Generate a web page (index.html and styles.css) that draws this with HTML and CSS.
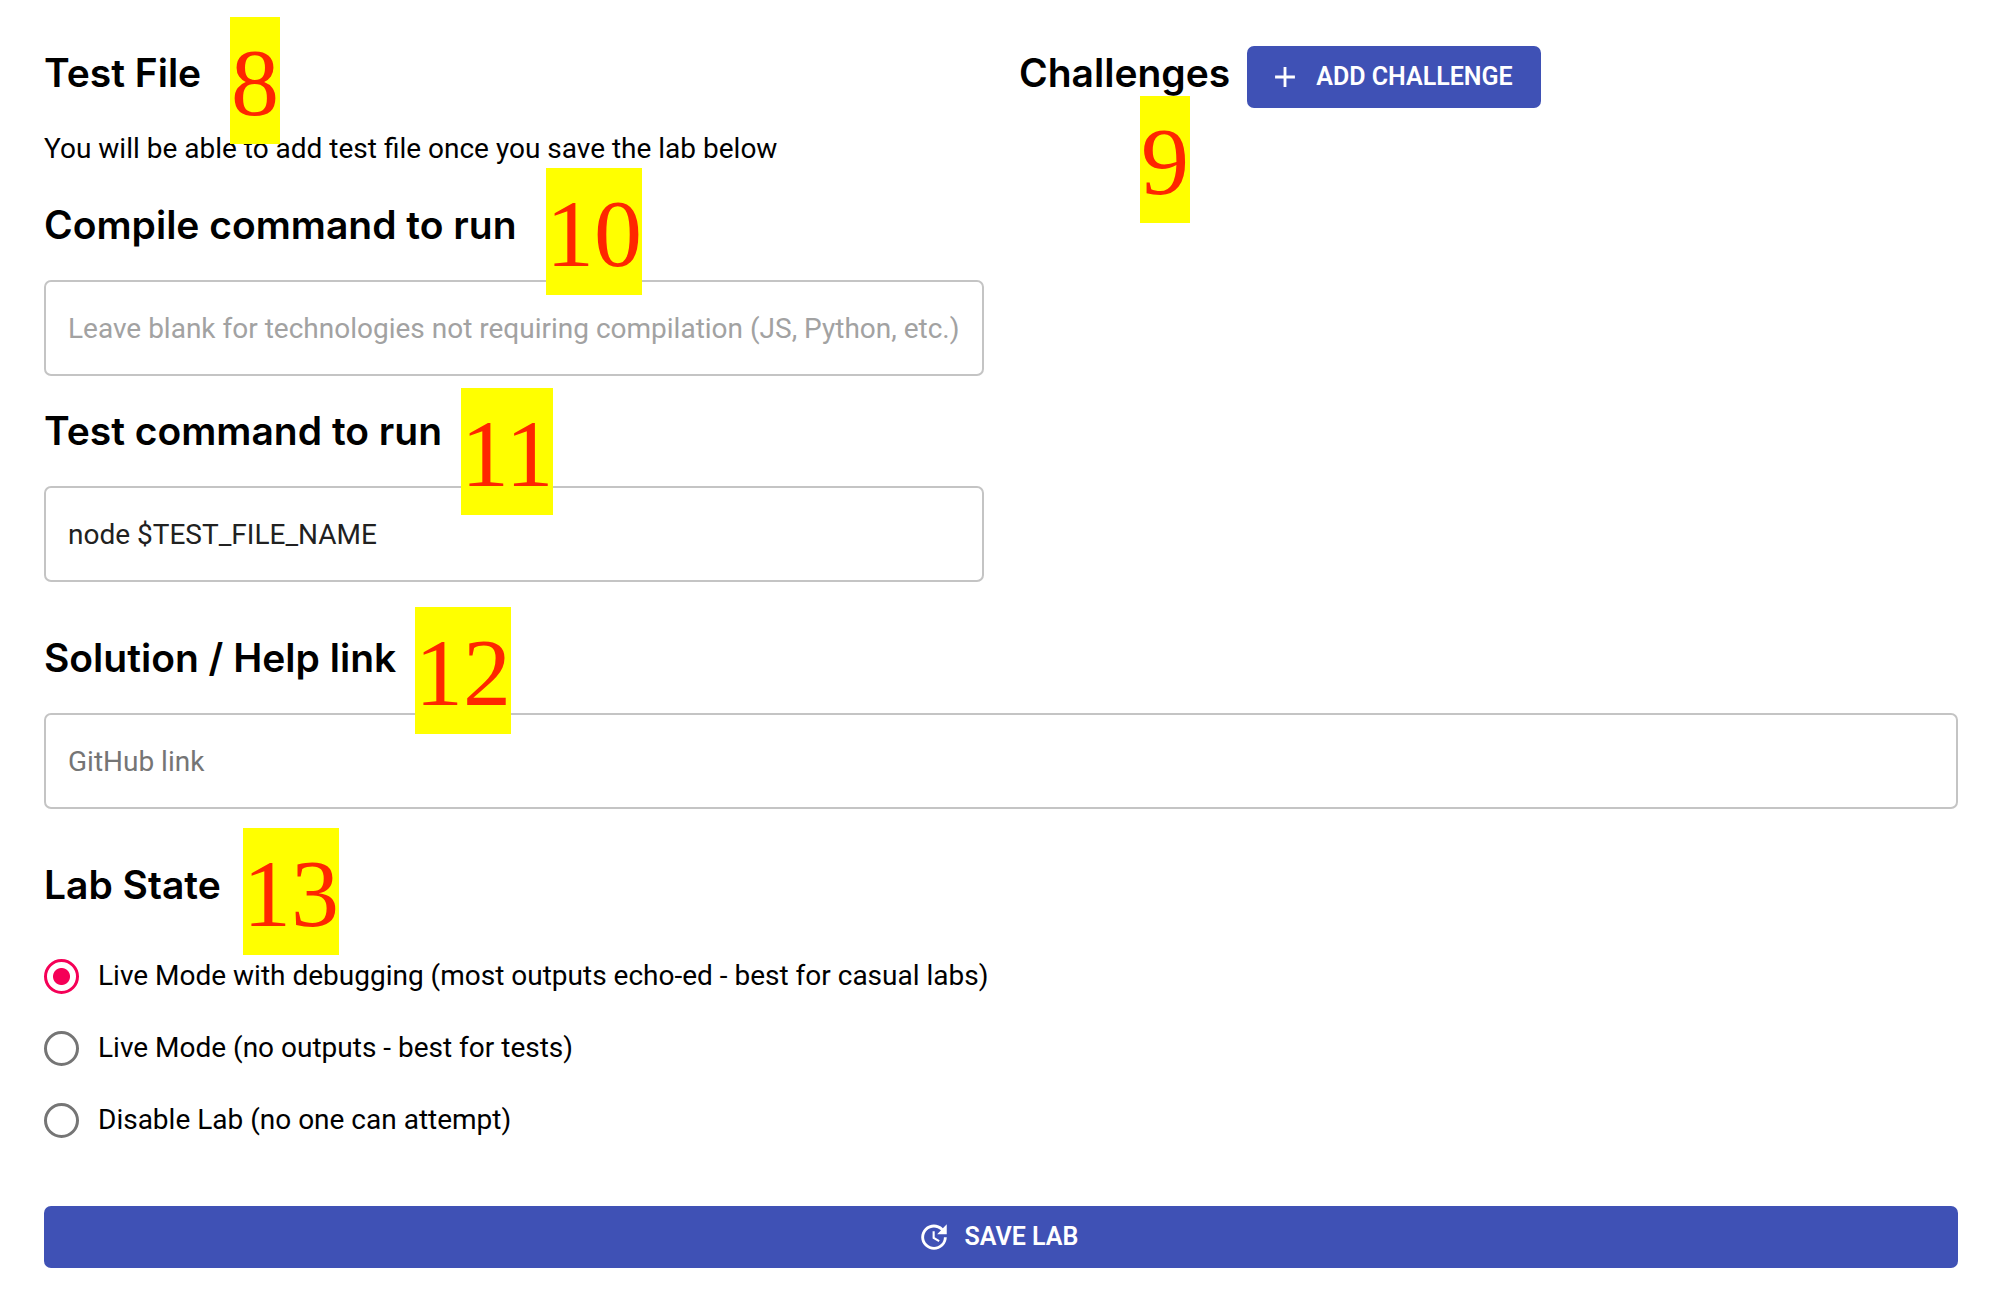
FILE: index.html
```html
<!DOCTYPE html>
<html lang="en">
<head>
<meta charset="utf-8">
<title>Lab editor</title>
<link rel="stylesheet" href="styles.css">
</head>
<body>
<form class="lab-form">
  <div class="columns">
    <div class="stack">
      <h2 class="heading">Test File <span class="marker marker-8">8</span></h2>
      <p class="note">You will be able to add test file once you save the lab below</p>
      <h2 class="heading"><label for="compile">Compile command to run</label> <span class="marker marker-10">10</span></h2>
      <input class="field" id="compile" type="text" placeholder="Leave blank for technologies not requiring compilation (JS, Python, etc.)">
      <h2 class="heading"><label for="test">Test command to run</label> <span class="marker marker-11">11</span></h2>
      <input class="field" id="test" type="text" value="node $TEST_FILE_NAME">
    </div>
    <div class="challenges">
      <h2 class="heading">Challenges <span class="marker marker-9">9</span></h2>
      <button class="button" type="button">
        <svg class="icon" viewBox="0 0 24 24" aria-hidden="true"><path d="M19 13h-6v6h-2v-6H5v-2h6V5h2v6h6v2z"/></svg>
        ADD CHALLENGE
      </button>
    </div>
  </div>

  <div class="stack section">
    <h2 class="heading"><label for="solution">Solution / Help link</label> <span class="marker marker-12">12</span></h2>
    <input class="field field-strong" id="solution" type="text" placeholder="GitHub link">
  </div>

  <div class="stack section">
    <h2 class="heading" id="state-title">Lab State <span class="marker marker-13">13</span></h2>
    <div class="options" role="radiogroup" aria-labelledby="state-title">
      <label class="option"><input class="radio" type="radio" name="state" checked>Live Mode with debugging (most outputs echo-ed - best for casual labs)</label>
      <label class="option"><input class="radio" type="radio" name="state">Live Mode (no outputs - best for tests)</label>
      <label class="option"><input class="radio" type="radio" name="state">Disable Lab (no one can attempt)</label>
    </div>
  </div>

  <button class="button save" type="submit">
    <svg class="icon" viewBox="0 0 24 24" aria-hidden="true"><path d="M21 10.12h-6.78l2.74-2.82c-2.73-2.7-7.15-2.8-9.88-.1-2.73 2.71-2.73 7.08 0 9.79s7.15 2.71 9.88 0C18.32 15.65 19 14.08 19 12.1h2c0 1.98-.88 4.55-2.64 6.29-3.51 3.48-9.21 3.48-12.72 0-3.5-3.47-3.53-9.11-.02-12.58s9.14-3.47 12.65 0L21 3v7.12zM12.5 8v4.25l3.5 2.08-.72 1.21L11 13V8h1.5z"/></svg>
    SAVE LAB
  </button>
</form>
</body>
</html>
```
FILE: styles.css
```css
* {
  box-sizing: border-box;
}

body {
  margin: 0;
  background: #fff;
  color: #000;
  font: 400 28px/42px Roboto, sans-serif;
}

.lab-form {
  display: flex;
  flex-direction: column;
  padding: 49px 42px 25px 44px;
}

.columns {
  display: grid;
  grid-template-columns: 940fr 939fr;
  gap: 35px;
  align-items: start;
}

.stack {
  display: flex;
  flex-direction: column;
  gap: 31px;
}

.section {
  margin-top: 52px;
}

.heading {
  position: relative;
  width: fit-content;
  margin: 0;
  font: 600 39px/48px Inter, sans-serif;
}

.note {
  margin: 0;
}

.field {
  width: 100%;
  height: 96px;
  padding: 0 22px;
  border: 2px solid #c4c4c4;
  border-radius: 7px;
  background: #fff;
  color: #212121;
  font: inherit;
}

.field::placeholder {
  color: #a2a2a2;
  opacity: 1;
}

.field-strong::placeholder {
  color: #757575;
}

.challenges {
  display: flex;
  align-items: center;
  gap: 17px;
  margin-top: -3px;
}

.challenges .heading {
  margin-bottom: 8px;
}

.button {
  display: flex;
  align-items: center;
  justify-content: center;
  gap: 14px;
  height: 62px;
  padding: 0 28px 0 21px;
  border: 0;
  border-radius: 7px;
  background: #3f51b5;
  color: #fff;
  font: 600 25px/42px Roboto, sans-serif;
}

.save {
  width: 100%;
  margin-top: 50px;
}

.icon {
  width: 34px;
  height: 34px;
  fill: currentColor;
}

.options {
  display: flex;
  flex-direction: column;
}

.option {
  display: flex;
  align-items: center;
  gap: 19px;
  height: 72px;
}

.radio {
  appearance: none;
  width: 35px;
  height: 35px;
  margin: 0;
  border: 3px solid #757575;
  border-radius: 50%;
}

.radio:checked {
  border-color: #f50057;
  background: radial-gradient(circle, #f50057 8px, transparent 9px);
}

/* Numbered callouts laid over the form */
.marker {
  position: absolute;
  z-index: 1;
  min-width: 50px;
  height: 127px;
  background: #ff0;
  color: #ff2600;
  font: 400 96px/132px "Liberation Serif", serif;
  text-align: center;
}

.marker-8 {
  top: -32px;
  left: 186px;
}

.marker-9 {
  top: 47px;
  left: 121px;
}

.marker-10 {
  top: -33px;
  left: 502px;
}

.marker-11 {
  top: -19px;
  left: 417px;
}

.marker-12 {
  top: -27px;
  left: 371px;
}

.marker-13 {
  top: -33px;
  left: 199px;
}
```
